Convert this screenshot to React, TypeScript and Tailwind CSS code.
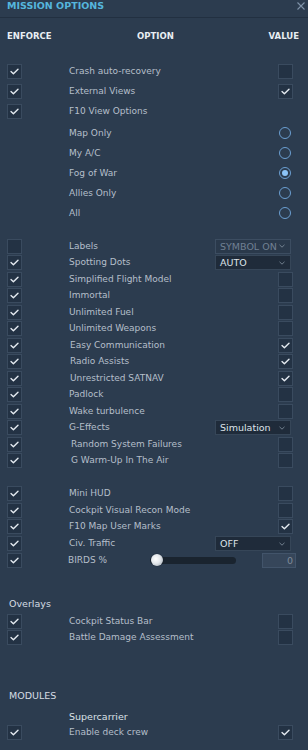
import React from 'react';

type Value =
  | { kind: 'check'; on: boolean }
  | { kind: 'radio'; on: boolean }
  | { kind: 'select'; text: string; disabled?: boolean }
  | { kind: 'none' };

interface OptionRow {
  label: string;
  enforce?: boolean; // undefined = no enforce box
  value: Value;
  indent?: string;
}

const chk = (on: boolean): Value => ({ kind: 'check', on });
const radio = (on: boolean): Value => ({ kind: 'radio', on });
const sel = (text: string, disabled = false): Value => ({ kind: 'select', text, disabled });

const viewRows: OptionRow[] = [
  { label: 'Crash auto-recovery', enforce: true, value: chk(false) },
  { label: 'External Views', enforce: true, value: chk(true) },
  { label: 'F10 View Options', enforce: true, value: { kind: 'none' } },
];

const mapRows: OptionRow[] = [
  { label: 'Map Only', value: radio(false) },
  { label: 'My A/C', value: radio(false) },
  { label: 'Fog of War', value: radio(true) },
  { label: 'Allies Only', value: radio(false) },
  { label: 'All', value: radio(false) },
];

const simRows: OptionRow[] = [
  { label: 'Labels', enforce: false, value: sel('SYMBOL ON', true) },
  { label: 'Spotting Dots', enforce: true, value: sel('AUTO') },
  { label: 'Simplified Flight Model', enforce: true, value: chk(false) },
  { label: 'Immortal', enforce: true, value: chk(false) },
  { label: 'Unlimited Fuel', enforce: true, value: chk(false) },
  { label: 'Unlimited Weapons', enforce: true, value: chk(false) },
  { label: 'Easy Communication', enforce: true, value: chk(true), indent: 'pl-[1px]' },
  { label: 'Radio Assists', enforce: true, value: chk(true), indent: 'pl-[1px]' },
  { label: 'Unrestricted SATNAV', enforce: true, value: chk(true), indent: 'pl-[1px]' },
  { label: 'Padlock', enforce: true, value: chk(false) },
  { label: 'Wake turbulence', enforce: true, value: chk(false) },
  { label: 'G-Effects', enforce: true, value: sel('Simulation') },
  { label: 'Random System Failures', enforce: true, value: chk(false), indent: 'pl-[2px]' },
  { label: 'G Warm-Up In The Air', enforce: true, value: chk(false), indent: 'pl-[2px]' },
];

const miscRows: OptionRow[] = [
  { label: 'Mini HUD', enforce: true, value: chk(false) },
  { label: 'Cockpit Visual Recon Mode', enforce: true, value: chk(false) },
  { label: 'F10 Map User Marks', enforce: true, value: chk(true) },
  { label: 'Civ. Traffic', enforce: true, value: sel('OFF') },
];

const overlayRows: OptionRow[] = [
  { label: 'Cockpit Status Bar', enforce: true, value: chk(false) },
  { label: 'Battle Damage Assessment', enforce: true, value: chk(false) },
];

function CheckBox({ on }: { on: boolean }) {
  return (
    <div className="w-[15px] h-[15px] bg-[#233244] border border-[#3a4b5f] flex items-center justify-center">
      {on && (
        <svg width="9" height="7" viewBox="0 0 9 7">
          <path d="M1 3.6 L3.4 5.8 L8 1.2" stroke="#e4eaf0" strokeWidth="1.4" fill="none" strokeLinecap="round" strokeLinejoin="round" />
        </svg>
      )}
    </div>
  );
}

function Radio({ on }: { on: boolean }) {
  return (
    <div className="w-[12px] h-[12px] rounded-full border-[1.5px] border-[#6b9fd2] flex items-center justify-center">
      {on && <div className="w-[6px] h-[6px] rounded-full bg-[#8cc4f7]" />}
    </div>
  );
}

function Select({ text, disabled }: { text: string; disabled?: boolean }) {
  return (
    <div
      className={`w-[76px] h-[15px] border flex items-center justify-between pl-[4px] pr-[5px] text-[9.5px] leading-none ${
        disabled
          ? 'bg-[#2a394b] border-[#3c4d61] text-[#718093]'
          : 'bg-[#1f2b3a] border-[#364658] text-[#dde3e9]'
      }`}
    >
      <span>{text}</span>
      <svg width="6" height="4" viewBox="0 0 6 4">
        <path d="M0.5 0.8 L3 3.2 L5.5 0.8" stroke="#7b8999" strokeWidth="0.9" fill="none" />
      </svg>
    </div>
  );
}

function ValueCell({ value }: { value: Value }) {
  switch (value.kind) {
    case 'check':
      return <CheckBox on={value.on} />;
    case 'radio':
      return (
        <div className="mr-[2px]">
          <Radio on={value.on} />
        </div>
      );
    case 'select':
      return (
        <div className="mr-[2px]">
          <Select text={value.text} disabled={value.disabled} />
        </div>
      );
    default:
      return null;
  }
}

function Row({ row, h }: { row: OptionRow; h: string }) {
  return (
    <div className={`flex items-center ${h}`}>
      <div className="w-[69px] shrink-0 pl-[7px]">
        {row.enforce !== undefined && <CheckBox on={row.enforce} />}
      </div>
      <div className={`flex-1 text-[9px] leading-[11px] text-[#b5bfca] whitespace-nowrap ${row.indent ?? ''}`}>
        {row.label}
      </div>
      <div className="shrink-0 pr-[15px] flex justify-end">
        <ValueCell value={row.value} />
      </div>
    </div>
  );
}

function BirdsRow() {
  return (
    <div className="flex items-center h-[16.75px]">
      <div className="w-[68px] shrink-0 pl-[7px]">
        <CheckBox on />
      </div>
      <div className="w-[82px] shrink-0 text-[9px] leading-[11px] text-[#b5bfca]">BIRDS %</div>
      {/* slider: knob sits over the left end of the track */}
      <div className="relative w-[86px] h-[13px] shrink-0 flex items-center">
        <div className="w-full h-[7px] rounded-full bg-[#1a242f]" />
        <div className="absolute left-[1px] top-[0.5px] w-[12px] h-[12px] rounded-full bg-[radial-gradient(circle_at_40%_40%,#ffffff_0%,#e3e7eb_45%,#9aa3ad_100%)] shadow-[0_0_1px_#0b1118]" />
      </div>
      <div className="flex-1" />
      <div className="w-[34px] h-[15px] mr-[12px] bg-[#36465a] border border-[#42546a] text-[9.5px] leading-none text-[#7e8b99] flex items-center justify-end pr-[2px]">
        0
      </div>
    </div>
  );
}

export default function App() {
  return (
    <div className="w-[308px] h-[750px] overflow-hidden bg-[#2c3c4f] font-['DejaVu_Sans',sans-serif] flex flex-col">
      {/* タイトルバー */}
      <div className="h-[18px] shrink-0 border-b border-[#223041] flex items-start justify-between pl-[7px] pr-[2px]">
        <span className="text-[9.5px] leading-[12px] font-bold text-[#55b6dd]">MISSION OPTIONS</span>
        <svg width="10" height="10" viewBox="0 0 10 10" className="mt-[1px]">
          <path d="M1.5 1.5 L8.5 8.5 M8.5 1.5 L1.5 8.5" stroke="#7f93a9" strokeWidth="1.1" />
        </svg>
      </div>

      {/* column headers */}
      <div className="h-[37px] shrink-0 flex items-center text-[8.5px] font-bold text-[#e9eef3]">
        <div className="w-[130px] pl-[7px]">ENFORCE</div>
        <div className="flex-1 pl-[7px]">OPTION</div>
        <div className="pr-[9px]">VALUE</div>
      </div>

      <div className="mt-[6px] flex flex-col">
        {viewRows.map((r) => (
          <Row key={r.label} row={r} h="h-[20px]" />
        ))}
      </div>
      <div className="mt-[2px] flex flex-col">
        {mapRows.map((r) => (
          <Row key={r.label} row={r} h="h-[20px]" />
        ))}
      </div>

      <div className="mt-[15px] flex flex-col">
        {simRows.map((r) => (
          <Row key={r.label} row={r} h="h-[16.5px]" />
        ))}
      </div>

      <div className="mt-[16px] flex flex-col">
        {miscRows.map((r) => (
          <Row key={r.label} row={r} h="h-[16.75px]" />
        ))}
        <BirdsRow />
      </div>

      <div className="mt-[28px] h-[14px] flex items-center pl-[9px] text-[9.5px] text-[#d6dde4]">Overlays</div>
      <div className="mt-[3px] flex flex-col">
        {overlayRows.map((r) => (
          <Row key={r.label} row={r} h="h-[16px]" />
        ))}
      </div>

      <div className="mt-[43px] h-[14px] flex items-center pl-[9px] text-[9.5px] text-[#d6dde4]">MODULES</div>
      <div className="mt-[7px] h-[14px] flex items-center pl-[69px] text-[9.5px] text-[#dbe1e7]">Supercarrier</div>
      <div className="mt-[1px]">
        <Row row={{ label: 'Enable deck crew', enforce: true, value: chk(true) }} h="h-[16px]" />
      </div>
    </div>
  );
}
